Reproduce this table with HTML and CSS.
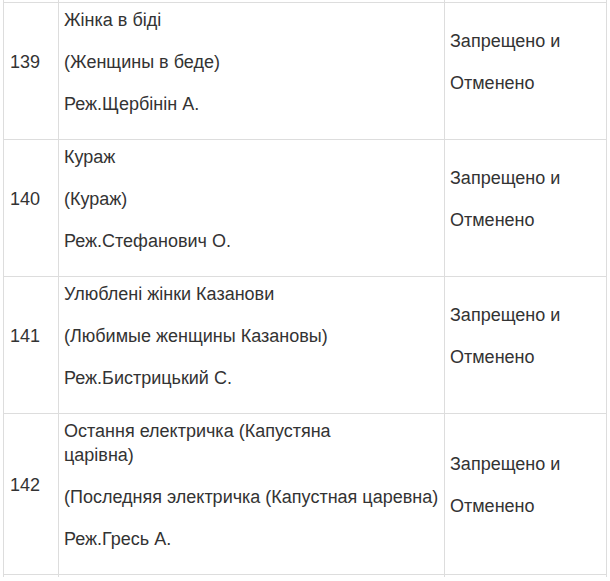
FILE: index.html
```html
<!DOCTYPE html>
<html lang="uk">
<head>
<meta charset="utf-8">
<title>Фільми</title>
<link rel="stylesheet" href="styles.css">
</head>
<body>
<table class="films">
  <colgroup>
    <col class="c-num">
    <col class="c-title">
    <col class="c-status">
  </colgroup>
  <tr class="cut"><td></td><td></td><td></td></tr>
  <tr>
    <td><p>139</p></td>
    <td><p>Жінка в біді</p><p>(Женщины в беде)</p><p>Реж.Щербінін А.</p></td>
    <td><p>Запрещено и</p><p>Отменено</p></td>
  </tr>
  <tr>
    <td><p>140</p></td>
    <td><p>Кураж</p><p>(Кураж)</p><p>Реж.Стефанович О.</p></td>
    <td><p>Запрещено и</p><p>Отменено</p></td>
  </tr>
  <tr>
    <td><p>141</p></td>
    <td><p>Улюблені жінки Казанови</p><p>(Любимые женщины Казановы)</p><p>Реж.Бистрицький С.</p></td>
    <td><p>Запрещено и</p><p>Отменено</p></td>
  </tr>
  <tr>
    <td><p>142</p></td>
    <td><p>Остання електричка (Капустяна<br>царівна)</p><p>(Последняя электричка (Капустная царевна)</p><p>Реж.Гресь А.</p></td>
    <td><p>Запрещено и</p><p>Отменено</p></td>
  </tr>
  <tr class="cut"><td></td><td></td><td></td></tr>
</table>
</body>
</html>
```
FILE: styles.css
```css
html, body {
  margin: 0;
  padding: 0;
  background: #fff;
}
body {
  font-family: "Liberation Sans", Arial, sans-serif;
  font-size: 18px;
  line-height: 24px;
  color: #333;
}
.films {
  border-collapse: collapse;
  table-layout: fixed;
  width: 603px;
  margin-left: 3px;
}
.c-num { width: 55px; }
.c-title { width: 386px; }
.c-status { width: 162px; }
.films td {
  border: 1px solid #ddd;
  padding: 5px;
  vertical-align: middle;
}
.films td:first-child {
  padding-left: 6px;
}
.films p {
  margin: 0 0 18px;
}
.films .cut td {
  height: 2px;
  padding: 0;
}
.films tr:first-child td { border-top: none; }
.films tr:last-child td { border-bottom: none; }
```
